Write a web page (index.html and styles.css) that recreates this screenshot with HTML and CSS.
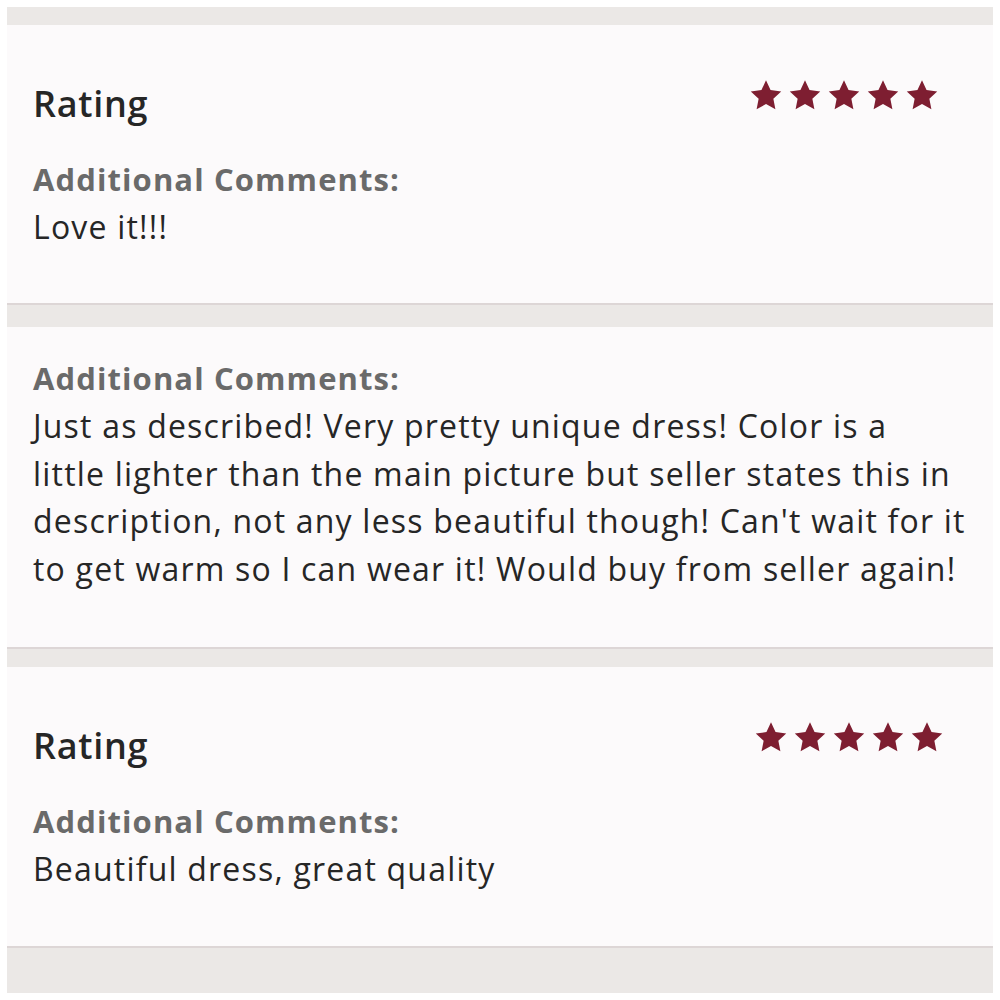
FILE: index.html
```html
<!DOCTYPE html>
<html>
<head>
<meta charset="utf-8">
<link rel="stylesheet" href="styles.css">
</head>
<body>
<div class="page">
  <div class="gap gap-top"></div>
  <section class="card card-1">
    <div class="head">
      <h2 class="title">Rating</h2>
      <div class="stars">
        <svg viewBox="0 0 24 24"><path d="M12 1L15.41 8.31L23.41 9.29L17.52 14.79L19.05 22.71L12 18.8L4.950 22.71L6.48 14.79L0.59 9.29L8.59 8.31Z"/></svg>
        <svg viewBox="0 0 24 24"><path d="M12 1L15.41 8.31L23.41 9.29L17.52 14.79L19.05 22.71L12 18.8L4.95 22.71L6.48 14.79L0.59 9.29L8.59 8.31Z"/></svg>
        <svg viewBox="0 0 24 24"><path d="M12 1L15.41 8.31L23.41 9.29L17.52 14.79L19.05 22.71L12 18.8L4.95 22.71L6.48 14.79L0.59 9.29L8.59 8.31Z"/></svg>
        <svg viewBox="0 0 24 24"><path d="M12 1L15.41 8.31L23.41 9.29L17.52 14.79L19.05 22.71L12 18.8L4.95 22.71L6.48 14.79L0.59 9.29L8.59 8.31Z"/></svg>
        <svg viewBox="0 0 24 24"><path d="M12 1L15.41 8.31L23.41 9.29L17.52 14.79L19.05 22.71L12 18.8L4.95 22.71L6.48 14.79L0.59 9.29L8.59 8.31Z"/></svg>
      </div>
    </div>
    <div class="label">Additional Comments:</div>
    <p class="text">Love it!!!</p>
  </section>
  <div class="gap gap-mid"></div>
  <section class="card card-2">
    <div class="label">Additional Comments:</div>
    <p class="text">Just as described! Very pretty unique dress! Color is a<br>little lighter than the main picture but seller states this in<br>description, not any less beautiful though! Can't wait for it<br>to get warm so I can wear it! Would buy from seller again!</p>
  </section>
  <div class="gap gap-mid2"></div>
  <section class="card card-3">
    <div class="head">
      <h2 class="title">Rating</h2>
      <div class="stars">
        <svg viewBox="0 0 24 24"><path d="M12 1L15.41 8.31L23.41 9.29L17.52 14.79L19.05 22.71L12 18.8L4.95 22.71L6.48 14.79L0.59 9.29L8.59 8.31Z"/></svg>
        <svg viewBox="0 0 24 24"><path d="M12 1L15.41 8.31L23.41 9.29L17.52 14.79L19.05 22.71L12 18.8L4.95 22.71L6.48 14.79L0.59 9.29L8.59 8.31Z"/></svg>
        <svg viewBox="0 0 24 24"><path d="M12 1L15.41 8.31L23.41 9.29L17.52 14.79L19.05 22.71L12 18.8L4.95 22.71L6.48 14.79L0.59 9.29L8.59 8.31Z"/></svg>
        <svg viewBox="0 0 24 24"><path d="M12 1L15.41 8.31L23.41 9.29L17.52 14.79L19.05 22.71L12 18.8L4.95 22.71L6.48 14.79L0.59 9.29L8.59 8.31Z"/></svg>
        <svg viewBox="0 0 24 24"><path d="M12 1L15.41 8.31L23.41 9.29L17.52 14.79L19.05 22.71L12 18.8L4.95 22.71L6.48 14.79L0.59 9.29L8.59 8.31Z"/></svg>
      </div>
    </div>
    <div class="label">Additional Comments:</div>
    <p class="text">Beautiful dress, great quality</p>
  </section>
  <div class="gap gap-bottom"></div>
</div>
</body>
</html>
```

FILE: styles.css
```css
html, body {
  margin: 0;
  padding: 0;
  background: #ffffff;
}
body {
  font-family: "Open Sans", Lato, sans-serif;
  color: #262626;
}
.page {
  margin: 7px 7px 0 7px;
  width: 986px;
  display: flex;
  flex-direction: column;
}
.gap {
  background: #ebe8e6;
}
.gap-top { height: 18px; }
.gap-mid { height: 22px; }
.gap-mid2 { height: 18px; }
.gap-bottom { height: 45px; }
.card {
  background: #fcfafb;
  border-bottom: 2px solid #ddd6d6;
  padding: 0 20px 0 26px;
  box-sizing: border-box;
}
.card-1 { height: 280px; padding-top: 57px; }
.card-2 { height: 322px; padding-top: 29px; }
.card-3 { height: 281px; padding-top: 57px; }
.head {
  display: flex;
  justify-content: space-between;
  align-items: flex-start;
}
.title {
  margin: 0;
  font-size: 36px;
  font-weight: 600;
  line-height: 44px;
  letter-spacing: 0.7px;
  color: #262626;
}
.stars {
  display: flex;
  gap: 7px;
  margin-right: 35px;
  margin-top: -3px;
}
.card-3 .stars {
  margin-right: 30px;
}
.stars svg {
  width: 32px;
  height: 32px;
  fill: #7e1e31;
}
.label {
  margin-top: 31px;
  font-size: 31px;
  font-weight: 700;
  line-height: 45px;
  letter-spacing: 1.1px;
  color: #6a6a6a;
}
.card-2 .label { margin-top: 0; }
.text {
  margin: 1px 0 0 0;
  font-size: 32px;
  line-height: 47.5px;
  letter-spacing: 1.2px;
  white-space: nowrap;
  color: #262626;
}
```
